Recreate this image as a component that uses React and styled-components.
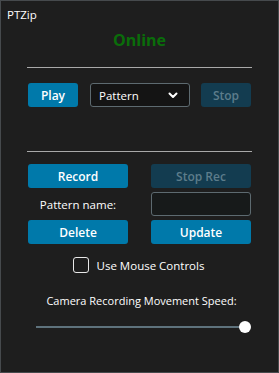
import React from "react";
import styled, { createGlobalStyle } from "styled-components";

const Global = createGlobalStyle`
  html, body { margin: 0; padding: 0; background: #1e1e1e; }
  * { box-sizing: border-box; }
`;

const Frame = styled.div`
  width: 279px;
  height: 373px;
  border: 1px solid #464a4d;
  background: #1e1e1e;
  color: #ffffff;
  font-family: "Open Sans", "Noto Sans", sans-serif;
  font-size: 11px;
  display: flex;
  flex-direction: column;
  overflow: hidden;
`;

const Title = styled.div`
  padding: 6px 0 0 6px;
  height: 24px;
  line-height: 16px;
  font-size: 11.5px;
`;

const Status = styled.div`
  text-align: center;
  font-weight: 700;
  font-size: 16px;
  line-height: 22px;
  color: #0a6d0a;
  margin-top: 4px;
`;

const Rule = styled.div`
  margin: ${(p) => p.$top}px 26px 0;
  height: 1px;
  flex-shrink: 0;
  background: #a9a9a9;
`;

const Row = styled.div`
  display: flex;
  align-items: center;
  margin: ${(p) => p.$top}px 27px 0;
`;

const Spacer = styled.div`
  width: ${(p) => p.$w}px;
  flex-shrink: 0;
`;

const Button = styled.button`
  width: ${(p) => p.$w}px;
  height: 24px;
  border: none;
  border-radius: 3px;
  background: ${(p) => (p.disabled ? "#133c50" : "#0079aa")};
  color: ${(p) => (p.disabled ? "#5d7d8b" : "#ffffff")};
  font-family: inherit;
  font-weight: 600;
  font-size: 12px;
  padding: 0;
  cursor: pointer;
`;

const Select = styled.div`
  width: 100px;
  height: 24px;
  border: 1px solid #5d6a70;
  border-radius: 3px;
  background: #141414;
  display: flex;
  align-items: center;
  justify-content: space-between;
  padding: 0 11px 0 8px;
  font-size: 11.5px;
`;

const Grid = styled.div`
  display: grid;
  grid-template-columns: 100px 100px;
  column-gap: 23px;
  row-gap: 4px;
  margin: 12px 27px 0;
`;

const Label = styled.div`
  height: 24px;
  display: flex;
  align-items: center;
  justify-content: center;
  font-size: 11.5px;
`;

const Input = styled.div`
  height: 24px;
  border: 1px solid #5d6a70;
  border-radius: 3px;
  background: #171a1a;
`;

const CheckRow = styled.label`
  display: flex;
  align-items: center;
  justify-content: center;
  gap: 8px;
  height: 16px;
  margin-top: 13px;
  margin-left: -2px;
  font-size: 11.5px;
`;

const Box = styled.span`
  width: 16px;
  height: 16px;
  border: 1px solid #e8e8e8;
  border-radius: 3px;
`;

const SpeedLabel = styled.div`
  text-align: center;
  margin-top: 20px;
  font-size: 11px;
  line-height: 16px;
  margin-left: 4px;
`;

const Slider = styled.div`
  position: relative;
  margin: 12px 0 0 35px;
  width: 215px;
  height: 12px;
`;

const Track = styled.div`
  position: absolute;
  left: 0;
  right: 6px;
  top: 5px;
  height: 2px;
  background: #5e727c;
`;

const Thumb = styled.div`
  position: absolute;
  right: 0;
  top: 0;
  width: 12px;
  height: 12px;
  border-radius: 50%;
  background: #ffffff;
`;

const Chevron = () => (
  <svg width="10" height="7" viewBox="0 0 10 7">
    <path d="M1.5 1.5 L5 5 L8.5 1.5" fill="none" stroke="#fff" strokeWidth="2" strokeLinecap="round" strokeLinejoin="round" />
  </svg>
);

export default function App() {
  return (
    <>
      <Global />
      <Frame>
        <Title>PTZip</Title>
        <Status>Online</Status>
        <Rule $top={16} />
        <Row $top={15}>
          <Button $w={50}>Play</Button>
          <Spacer $w={12} />
          <Select>
            <span>Pattern</span>
            <Chevron />
          </Select>
          <Spacer $w={11} />
          <Button $w={50} disabled>Stop</Button>
        </Row>
        <Rule $top={44} />
        <Grid>
          <Button $w={100}>Record</Button>
          <Button $w={100} disabled>Stop Rec</Button>
          <Label>Pattern name:</Label>
          <Input />
          <Button $w={100}>Delete</Button>
          <Button $w={100}>Update</Button>
        </Grid>
        <CheckRow>
          <Box />
          <span>Use Mouse Controls</span>
        </CheckRow>
        <SpeedLabel>Camera Recording Movement Speed:</SpeedLabel>
        <Slider>
          <Track />
          <Thumb />
        </Slider>
      </Frame>
    </>
  );
}
